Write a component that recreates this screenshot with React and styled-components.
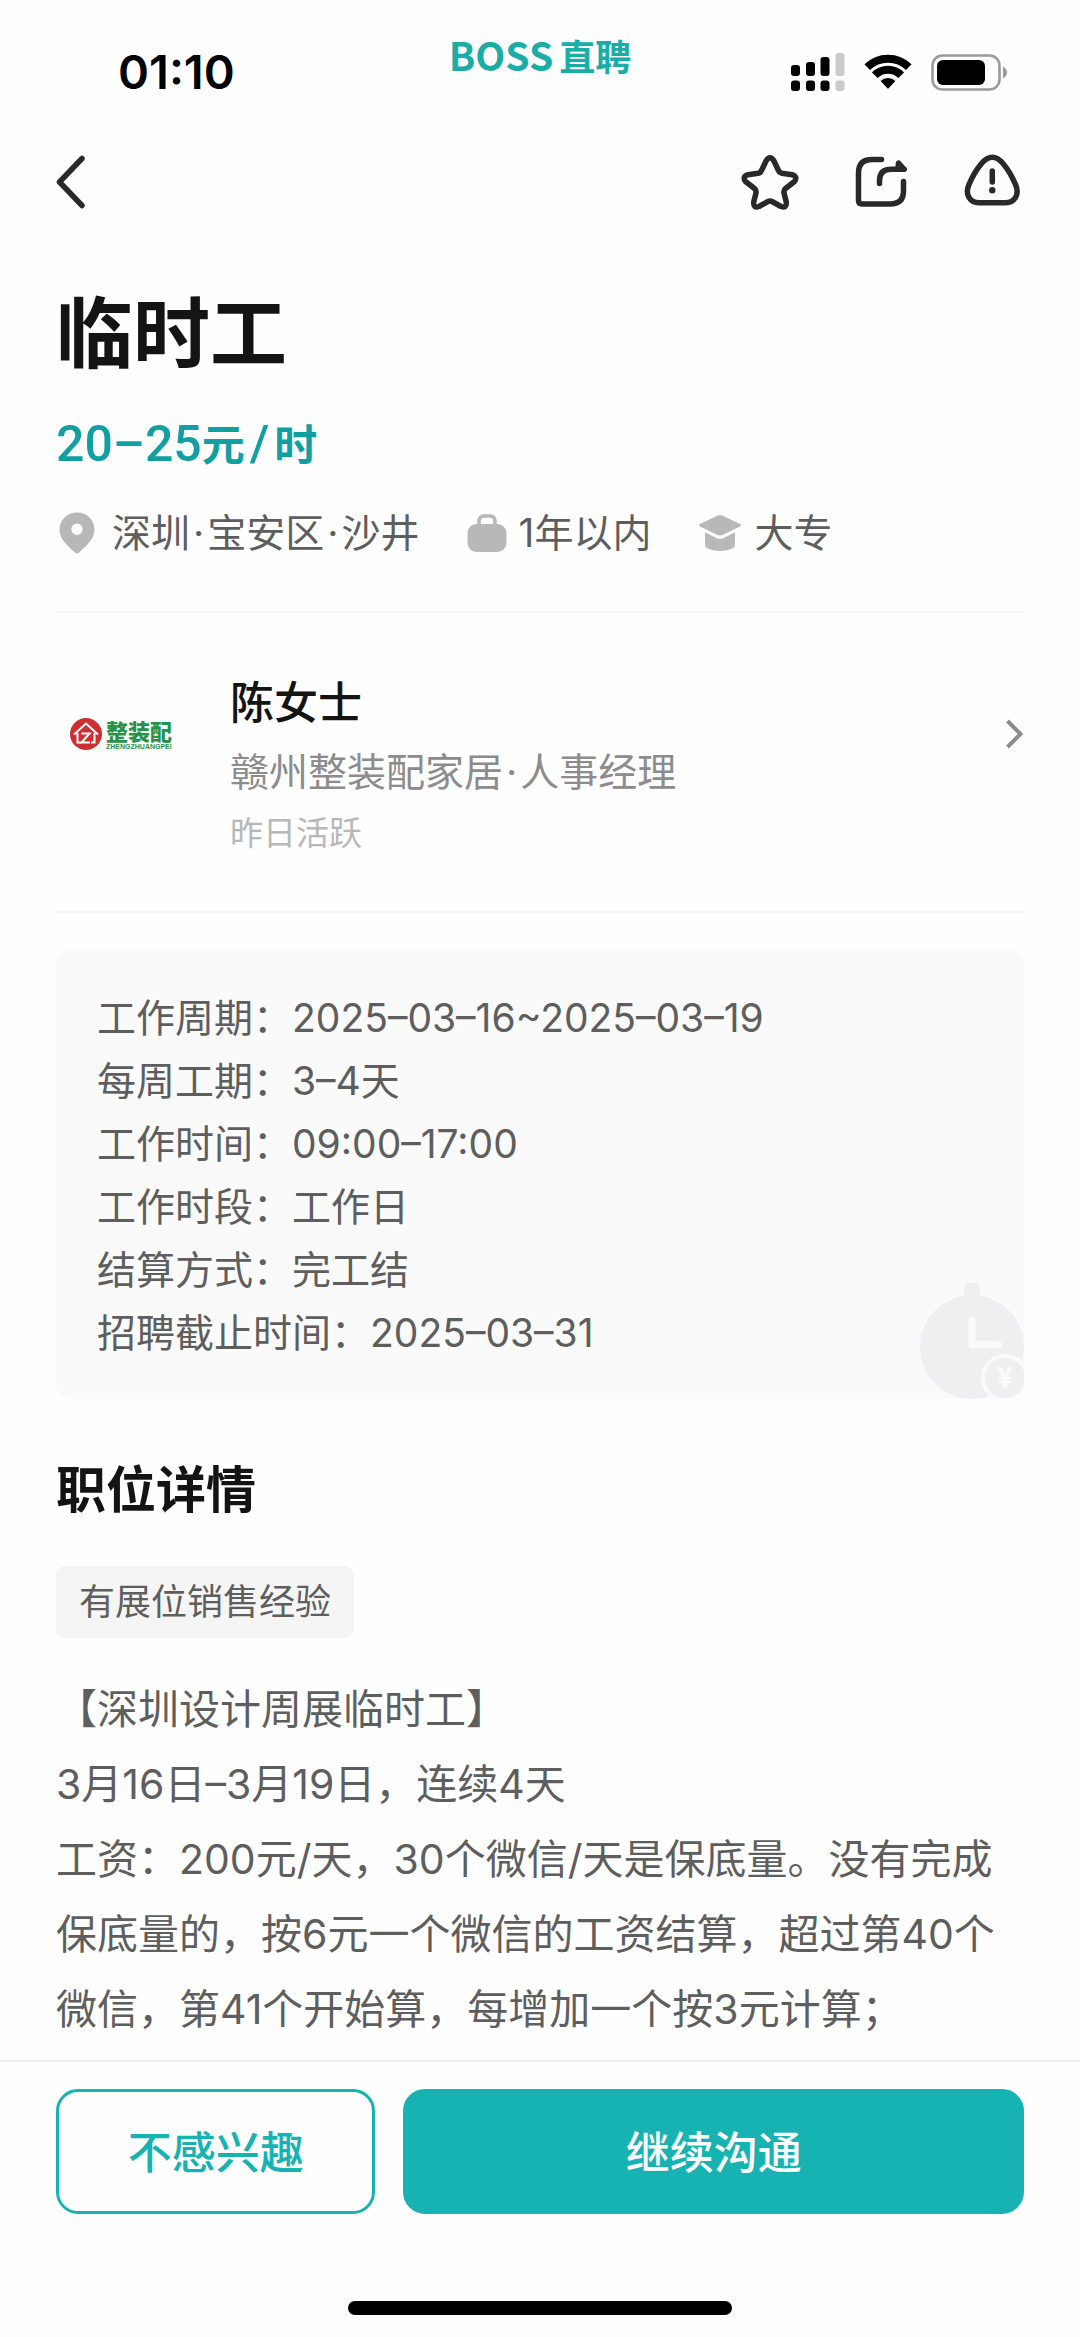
import styled, { createGlobalStyle } from 'styled-components';

const schedule = [
  { label: '工作周期：', value: '2025–03–16~2025–03–19' },
  { label: '每周工期：', value: '3–4天' },
  { label: '工作时间：', value: '09:00–17:00' },
  { label: '工作时段：', value: '工作日' },
  { label: '结算方式：', value: '完工结' },
  { label: '招聘截止时间：', value: '2025–03–31' },
];

const description = [
  '【深圳设计周展临时工】',
  '3月16日–3月19日，连续4天',
  '工资：200元/天，30个微信/天是保底量。没有完成保底量的，按6元一个微信的工资结算，超过第40个微信，第41个开始算，每增加一个按3元计算；',
];

const SignalIcon = () => (
  <svg width='54' height='38' viewBox='0 0 54 38' aria-hidden='true'>
    <rect x='0' y='12' width='9' height='11' rx='3' />
    <rect x='15' y='9' width='9' height='14' rx='3' />
    <rect x='29.5' y='4' width='9' height='19' rx='3' />
    <rect x='44.5' y='0' width='9' height='23' rx='3' fill='#cbcbcb' />
    <rect x='0' y='27.5' width='9' height='10.5' rx='3' />
    <rect x='15' y='27.5' width='9' height='10.5' rx='3' />
    <rect x='29.5' y='27.5' width='9' height='10.5' rx='3' />
    <rect x='44.5' y='27.5' width='9' height='10.5' rx='3' fill='#cbcbcb' />
  </svg>
);

const WifiIcon = () => (
  <svg width='48' height='36' viewBox='0 0 48 36' aria-hidden='true'>
    <path d='M3.2 13.2A29.6 29.6 0 0 1 44.8 13.2' fill='none' stroke='#000' strokeWidth='8' />
    <path d='M10.8 21.2A18.6 18.6 0 0 1 37.2 21.2' fill='none' stroke='#000' strokeWidth='8' />
    <path d='M16.6 27.1A10.5 10.5 0 0 1 31.4 27.1L24.6 34.2Q24 34.8 23.4 34.2Z' />
  </svg>
);

const BatteryIcon = () => (
  <svg width='77' height='37' viewBox='0 0 77 37' aria-hidden='true'>
    <rect x='1.5' y='1.5' width='67' height='34' rx='10' fill='none' stroke='#9b9b9b' strokeWidth='2.6' />
    <rect x='6' y='6' width='48' height='25' rx='6' />
    <path d='M72 12.5Q76 15 76 18.5T72 24.5Z' fill='#9b9b9b' />
  </svg>
);

const BackIcon = () => (
  <svg width='32' height='60' viewBox='0 0 32 60' aria-hidden='true'>
    <path d='M26 6.500L3.500 30L26 53.500' />
  </svg>
);

const StarIcon = () => (
  <svg width='64' height='64' viewBox='0 0 64 64' aria-hidden='true'>
    <path d='M28.300 10.500Q32 5 35.700 10.500L40.500 20.500Q41.500 22.800 44 23.300L54 24.700Q60 26.500 56.500 31.500L47.500 38.500Q45.500 40.500 46 43L48.300 52Q48.800 58.500 43 56.500L34 51.500Q32 50.500 30 51.500L21 56.500Q15.200 58.500 15.700 52L18 43Q18.500 40.500 16.500 38.500L7.500 31.500Q4 26.500 10 24.700L20 23.300Q22.500 22.800 23.500 20.500Z' />
  </svg>
);

const ShareIcon = () => (
  <svg width='64' height='64' viewBox='0 0 64 64' aria-hidden='true'>
    <path d='M32.500 9.500H23Q9.500 9.500 9.500 23V50.500Q9.500 54 13 54H41Q54.500 54 54.500 41V31.500' />
    <path d='M30.500 33.500V31Q30.500 19.300 42 19.300H55' />
    <path d='M49.500 13L55 19.300H49Z' fill='#292929' />
  </svg>
);

const WarningIcon = () => (
  <svg width='64' height='64' viewBox='0 0 64 64' aria-hidden='true'>
    <path d='M21.500 13.500Q32.300 1 43 13.500Q50.500 22.500 55.500 34.500C60 44.500 54.500 52.700 45.500 52.700H19C10 52.700 4.500 44.500 9 34.500Q14 22.500 21.500 13.500Z' />
    <path d='M32.300 21V32' />
    <circle cx='32.300' cy='40.300' r='3.200' fill='#292929' stroke='none' />
  </svg>
);

const PinIcon = () => (
  <svg width='40' height='42' viewBox='-3 0 40 42' aria-hidden='true'>
    <path
      fillRule='evenodd'
      d='M18 0.500C27.800 0.500 35.500 8 35.500 17.500C35.500 26 30 31.500 19.800 40.700Q18 42.200 16.200 40.700C6 31.500 0.500 26 0.500 17.500C0.500 8 8.200 0.500 18 0.500ZM18 11.500A5.700 5.700 0 1 0 18 22.900A5.700 5.700 0 1 0 18 11.500Z'
    />
  </svg>
);

const BagIcon = () => (
  <svg width='40' height='40' viewBox='0 0 40 40' aria-hidden='true'>
    <rect x='0.500' y='11' width='39' height='28' rx='9' />
    <path d='M12 13V8.500Q12 3 17 3H23Q28 3 28 8.500V13' fill='none' stroke='#b8b8b8' strokeWidth='3.600' />
  </svg>
);

const DegreeIcon = () => (
  <svg width='44' height='38' viewBox='0 0 44 38' aria-hidden='true'>
    <path d='M19.500 1.600Q22 0.500 24.500 1.600L42 10Q44.400 11.200 42 12.400L24 21.200Q22 22 20 21.200L2 12.400Q-0.400 11.200 2 10Z' />
    <path d='M7 18.500L19.500 24.500Q22 25.500 24.500 24.500L37 18.500V31Q37 33.500 34.500 34.500Q22 39.500 9.500 34.500Q7 33.500 7 31Z' />
  </svg>
);

const ChevronIcon = () => (
  <svg width='20' height='32' viewBox='0 0 20 32' aria-hidden='true'>
    <path d='M3.500 3L16.500 16L3.500 29' fill='none' stroke='#8c8c8c' strokeWidth='4' />
  </svg>
);

const CompanyLogo = () => (
  <svg width='106' height='36' viewBox='0 0 106 36' role='img' aria-label='整装配'>
    <circle cx='17' cy='18' r='16' fill='#cf2f33' />
    <path d='M5 18.500L17 7.500L29 18.500M8.500 17V26.500H12M25.500 17V26.500H22' fill='none' stroke='#fff' strokeWidth='2' />
    <path d='M12.500 17.500H20.500L12.500 26.500H21' fill='none' stroke='#fff' strokeWidth='2' />
    <LogoName x='37' y='24'>整装配</LogoName>
    <LogoPinyin x='37' y='33'>ZHENGZHUANGPEI</LogoPinyin>
  </svg>
);

const ClockMark = () => (
  <svg width='104' height='116' viewBox='0 0 104 116' aria-hidden='true'>
    <rect x='44' y='0' width='16' height='24' rx='6' fill='#efeff1' />
    <circle cx='52' cy='64' r='52' fill='#efeff1' />
    <path d='M52 37V61.500H78' fill='none' stroke='#fafafa' strokeWidth='7.500' strokeLinecap='round' strokeLinejoin='round' />
    <circle cx='85' cy='95' r='22' fill='#efeff1' stroke='#fafafa' strokeWidth='4' />
    <YuanSign x='85' y='105'>¥</YuanSign>
  </svg>
);

const App = () => {
  return (
    <Page lang='zh-CN'>
      <GlobalStyle />
      <StatusBar>
        <Time>01:10</Time>
        <Brand>
          <BrandLatin>BOSS</BrandLatin>直聘
        </Brand>
        <StatusIcons>
          <SignalIcon />
          <WifiIcon />
          <BatteryIcon />
        </StatusIcons>
      </StatusBar>

      <NavBar>
        <IconButton aria-label='返回'>
          <BackIcon />
        </IconButton>
        <NavActions>
          <IconButton aria-label='收藏'>
            <StarIcon />
          </IconButton>
          <IconButton aria-label='分享'>
            <ShareIcon />
          </IconButton>
          <IconButton aria-label='举报'>
            <WarningIcon />
          </IconButton>
        </NavActions>
      </NavBar>

      <Content>
        <Title>临时工</Title>
        <Salary>
          <SalaryNumber>20–25</SalaryNumber>元<SalarySlash>/</SalarySlash>时
        </Salary>
        <MetaList>
          <MetaItem $gap={16}>
            <PinIcon />
            <span>
              深圳<Dot>·</Dot>宝安区<Dot>·</Dot>沙井
            </span>
          </MetaItem>
          <MetaItem $gap={12}>
            <BagIcon />
            1年以内
          </MetaItem>
          <MetaItem $gap={12}>
            <DegreeIcon />
            大专
          </MetaItem>
        </MetaList>

        <Recruiter href='#recruiter'>
          <Avatar>
            <CompanyLogo />
          </Avatar>
          <RecruiterInfo>
            <RecruiterName>陈女士</RecruiterName>
            <Company>
              赣州整装配家居<Dot>·</Dot>人事经理
            </Company>
            <Activity>昨日活跃</Activity>
          </RecruiterInfo>
          <ChevronBox>
            <ChevronIcon />
          </ChevronBox>
        </Recruiter>

        <ScheduleCard>
          {schedule.map((item) => (
            <ScheduleRow key={item.label}>
              <dt>{item.label}</dt>
              <dd>{item.value}</dd>
            </ScheduleRow>
          ))}
          <CardMark>
            <ClockMark />
          </CardMark>
        </ScheduleCard>

        <SectionTitle>职位详情</SectionTitle>
        <Tag>有展位销售经验</Tag>
        <Description>
          {description.map((line) => (
            <p key={line}>{line}</p>
          ))}
        </Description>
      </Content>

      <Footer>
        <Actions>
          <OutlineButton>不感兴趣</OutlineButton>
          <PrimaryButton>继续沟通</PrimaryButton>
        </Actions>
        <HomeIndicator />
      </Footer>
    </Page>
  );
};

const GlobalStyle = createGlobalStyle`
  * {
    box-sizing: border-box;
    margin: 0;
    padding: 0;
  }

  body {
    background: #fefefe;
    color: #141414;
    font-family: Inter, 'Noto Sans CJK SC', sans-serif;
  }

  button {
    font-family: inherit;
    cursor: pointer;
  }

  svg {
    display: block;
    flex-shrink: 0;
  }
`;

const Page = styled.div`
  display: flex;
  flex-direction: column;
  min-height: 100vh;
`;

const StatusBar = styled.div`
  display: grid;
  grid-template-columns: 1fr auto 1fr;
  align-items: center;
  height: 144px;
  padding: 0 72px;
`;

const Time = styled.span`
  padding-left: 46px;
  color: #000;
  font-size: 47px;
  font-weight: 600;
  line-height: 56px;
`;

const Brand = styled.div`
  display: flex;
  align-self: start;
  align-items: baseline;
  gap: 6px;
  padding-top: 26px;
  color: #1aada7;
  font-family: 'Noto Sans CJK SC', sans-serif;
  font-size: 36px;
  font-weight: 700;
  line-height: 56px;
`;

const BrandLatin = styled.span`
  font-size: 39px;
`;

const StatusIcons = styled.div`
  display: flex;
  justify-content: flex-end;
  align-items: center;
  gap: 19px;
`;

const NavBar = styled.nav`
  display: flex;
  justify-content: space-between;
  align-items: center;
  height: 76px;
  padding: 0 56px;
`;

const NavActions = styled.div`
  display: flex;
  gap: 47px;
`;

const IconButton = styled.button`
  border: 0;
  background: none;

  svg {
    fill: none;
    stroke: #292929;
    stroke-width: 5.5px;
    stroke-linecap: round;
    stroke-linejoin: round;
  }
`;

const Content = styled.main`
  flex: 1;
  padding: 64px 56px 12px;
`;

const Title = styled.h1`
  font-size: 77px;
  font-weight: 600;
  line-height: 100px;
`;

const Salary = styled.p`
  margin-top: 31px;
  color: #129fa2;
  font-size: 43px;
  font-weight: 600;
  line-height: 60px;
`;

const SalaryNumber = styled.span`
  font-family: Roboto, sans-serif;
  font-size: 50px;
  font-weight: 500;
  line-height: 1;
`;

const SalarySlash = styled(SalaryNumber)`
  margin: 0 5px;
`;

const MetaList = styled.div`
  display: flex;
  gap: 47px;
  margin-top: 30px;
  padding-bottom: 50px;
  border-bottom: 2px solid #f7f7f7;
`;

const MetaItem = styled.div`
  display: flex;
  align-items: center;
  gap: ${({ $gap }) => $gap}px;
  color: #5e5e5e;
  font-size: 39px;
  line-height: 56px;

  svg {
    fill: #b8b8b8;
  }
`;

const Dot = styled.span`
  margin: 0 3px;
`;

const Recruiter = styled.a`
  display: flex;
  align-items: flex-start;
  padding: 55px 0 56px;
  border-bottom: 2px solid #f7f7f7;
  color: inherit;
  text-decoration: none;
`;

const Avatar = styled.div`
  display: flex;
  justify-content: center;
  align-items: center;
  width: 132px;
  height: 132px;
  border-radius: 50%;
`;

const LogoName = styled.text`
  fill: #27934a;
  font-size: 22px;
  font-weight: 900;
`;

const LogoPinyin = styled.text`
  fill: #27934a;
  font-family: 'Liberation Sans', sans-serif;
  font-size: 7px;
  font-weight: 700;
`;

const RecruiterInfo = styled.div`
  display: flex;
  flex: 1;
  flex-direction: column;
  gap: 13px;
  padding: 5px 0 0 42px;
`;

const RecruiterName = styled.h2`
  font-size: 44px;
  font-weight: 500;
  line-height: 60px;
`;

const Company = styled.p`
  color: #8c8c8c;
  font-size: 39px;
  line-height: 52px;
`;

const Activity = styled.p`
  color: #b8b8b8;
  font-size: 33px;
  line-height: 44px;
`;

const ChevronBox = styled.span`
  display: flex;
  align-items: center;
  height: 132px;
`;

const ScheduleCard = styled.dl`
  position: relative;
  margin-top: 36px;
  padding: 37px 41px 35px;
  overflow: hidden;
  border-radius: 16px;
  background: #fafafa;
  color: #5e5e5e;
  font-size: 39px;
  line-height: 63px;
`;

const ScheduleRow = styled.div`
  display: flex;
`;

const CardMark = styled.div`
  position: absolute;
  right: 0;
  bottom: 0;
`;

const YuanSign = styled.text`
  fill: #fafafa;
  font-size: 28px;
  font-weight: 700;
  text-anchor: middle;
`;

const SectionTitle = styled.h2`
  margin-top: 56px;
  font-size: 50px;
  font-weight: 600;
  line-height: 70px;
`;

const Tag = styled.span`
  display: inline-block;
  margin-top: 41px;
  padding: 0 23px;
  border-radius: 9px;
  background: #f5f5f5;
  color: #5e5e5e;
  font-size: 36px;
  line-height: 72px;
`;

const Description = styled.div`
  margin-top: 34px;
  color: #5e5e5e;
  font-size: 41px;
  line-height: 75px;
`;

const Footer = styled.footer`
  display: flex;
  flex-direction: column;
  align-items: center;
  gap: 87px;
  padding: 27px 56px 22px;
  border-top: 2px solid #f0f0f0;
`;

const Actions = styled.div`
  display: flex;
  gap: 28px;
  width: 100%;
`;

const ActionButton = styled.button`
  height: 125px;
  padding-bottom: 4px;
  border: 3px solid #17b3b3;
  border-radius: 22px;
  font-size: 44px;
  font-weight: 500;
`;

const OutlineButton = styled(ActionButton)`
  flex: 0 0 33%;
  background: transparent;
  color: #17b3b3;
`;

const PrimaryButton = styled(ActionButton)`
  flex: 1;
  background: #17b3b3;
  color: #fff;
`;

const HomeIndicator = styled.div`
  width: 384px;
  height: 14px;
  border-radius: 7px;
  background: #000;
`;

export default App;
